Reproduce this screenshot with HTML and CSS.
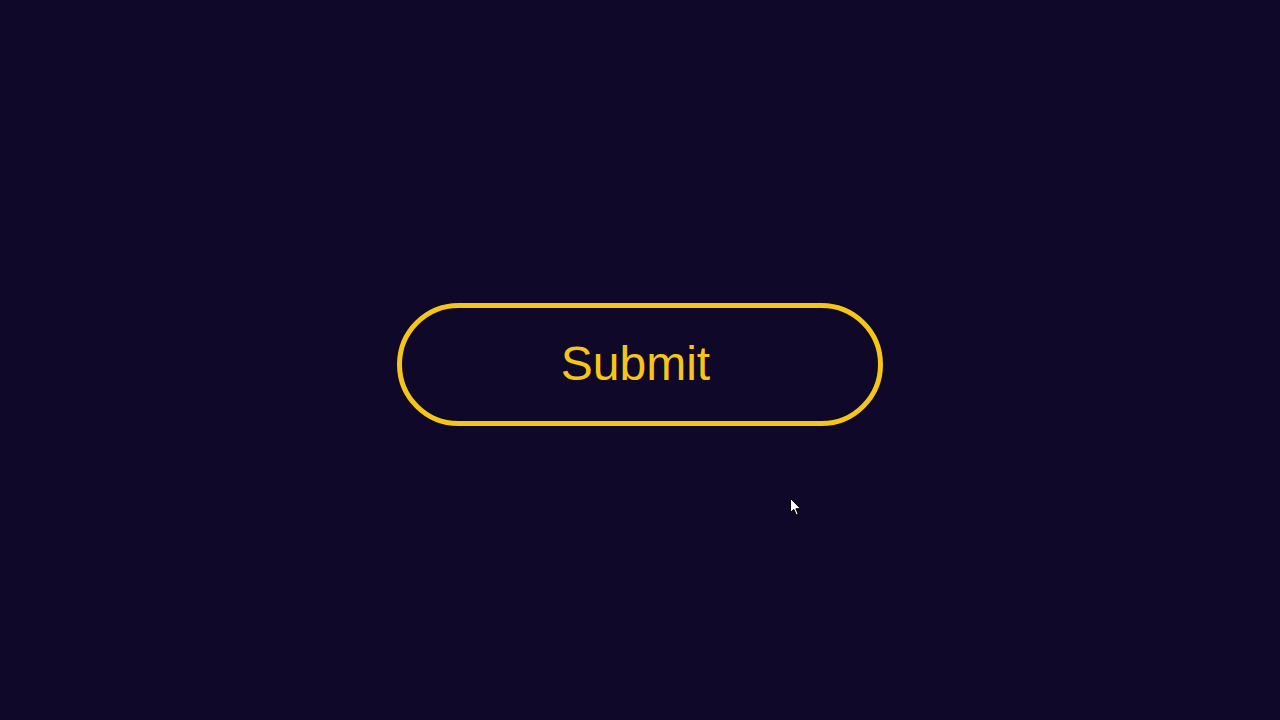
FILE: index.html
```html
<!DOCTYPE html>
<html lang="en">
<head>
<meta charset="utf-8">
<title>Submit</title>
<link rel="stylesheet" href="styles.css">
</head>
<body>
<main class="stage">
  <button class="submit-btn" type="button">Submit</button>
</main>
<svg class="cursor" width="12" height="18" viewBox="0 0 12 18" aria-hidden="true">
  <path d="M0.5 0.5 L0.5 14.5 L3.8 11.4 L6.2 16.8 L8.2 15.9 L5.9 10.7 L10.5 10.7 Z" fill="#ffffff" stroke="#000000" stroke-width="1"/>
</svg>
</body>
</html>
```

FILE: styles.css
```css
html, body {
  margin: 0;
  padding: 0;
  height: 100%;
}
body {
  background: #0f0828;
  font-family: "Liberation Sans", Arial, sans-serif;
  overflow: hidden;
}
.stage {
  height: 720px;
  display: flex;
  align-items: center;
  justify-content: center;
  padding-top: 9px;
  box-sizing: border-box;
}
.submit-btn {
  width: 486px;
  height: 123px;
  box-sizing: border-box;
  border: 5px solid #f5c518;
  border-radius: 62px;
  background: transparent;
  color: #f5c518;
  font-family: "Liberation Sans", Arial, sans-serif;
  font-size: 48px;
  padding: 0 9px 3px 0;
  cursor: pointer;
}
.cursor {
  position: absolute;
  left: 790px;
  top: 498px;
}
```
